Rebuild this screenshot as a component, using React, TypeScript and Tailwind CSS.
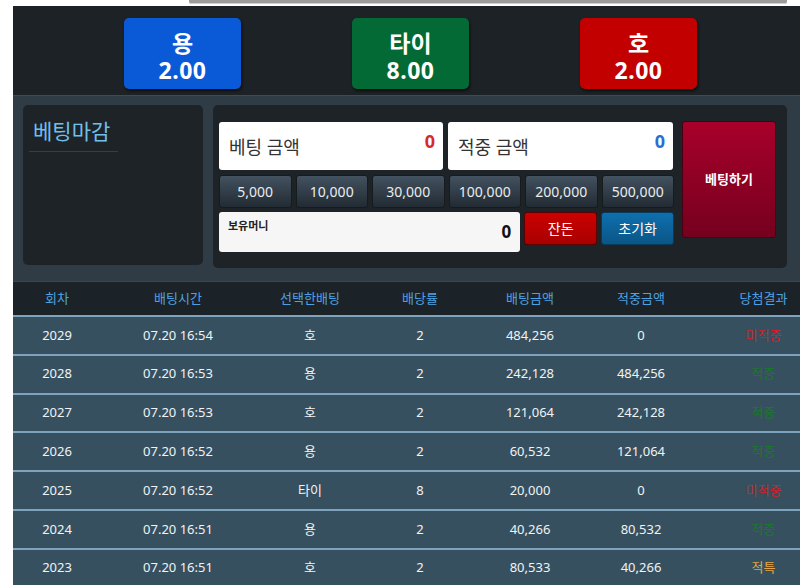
import React from "react";

const rows = [
  ["2029", "07.20 16:54", "호", "2", "484,256", "0", "미적중"],
  ["2028", "07.20 16:53", "용", "2", "242,128", "484,256", "적중"],
  ["2027", "07.20 16:53", "호", "2", "121,064", "242,128", "적중"],
  ["2026", "07.20 16:52", "용", "2", "60,532", "121,064", "적중"],
  ["2025", "07.20 16:52", "타이", "8", "20,000", "0", "미적중"],
  ["2024", "07.20 16:51", "용", "2", "40,266", "80,532", "적중"],
  ["2023", "07.20 16:51", "호", "2", "80,533", "40,266", "적특"],
];

const resultColor = (r: string) =>
  r === "미적중" ? "text-[#d4202c]" : r === "적중" ? "text-[#177a2a]" : "text-[#e8a445]";

const chips = ["5,000", "10,000", "30,000", "100,000", "200,000", "500,000"];

export default function App() {
  return (
    <div
      className="w-[800px] h-[585px] overflow-hidden bg-white relative"
      style={{ fontFamily: '"Noto Sans", "Noto Sans CJK KR", sans-serif' }}
    >
      <div className="h-[6px] relative">
        <div className="absolute left-[189px] w-[598px] top-0 h-[4px] bg-[#9b9b9b] rounded-b-[2px] border-b border-[#cfcfcf]" />
      </div>
      <div className="ml-[13px]">
        {/* Top choice buttons */}
        <div className="h-[89px] bg-[#1c2226] flex items-start pt-[12px] pl-[111px] gap-[111px]">
          {[
            ["용", "2.00", "bg-[#0a5ad8]"],
            ["타이", "8.00", "bg-[#036a35]"],
            ["호", "2.00", "bg-[#c20000]"],
          ].map(([t, v, c]) => (
            <div
              key={t}
              className={`w-[117px] h-[71px] rounded-[5px] ${c} flex flex-col items-center justify-center pt-[5px] text-white font-bold text-[23px] shadow-[1px_2px_3px_rgba(0,0,0,0.6)]`}
            >
              <div className="leading-[24px]">{t}</div>
              <div className="leading-[24px] mt-[3px] tracking-[0.5px]">{v}</div>
            </div>
          ))}
        </div>

        {/* Betting panel */}
        <div className="h-[186px] bg-[#2f3b45] border-t border-[#3e4a54] flex pt-[9px] pl-[10px]">
          <div className="w-[180px] h-[160px] rounded-[5px] bg-[#1e2328] pt-[12px] pl-[6px]">
            <div className="w-[89px] border-b border-[#343e46] pl-[4px] pb-[6px] text-[#6fc0ea] text-[21px] leading-[28px]">
              베팅마감
            </div>
          </div>
          <div className="ml-[10px] w-[574px] h-[163px] rounded-[5px] bg-[#1e2328] flex pt-[17px] pl-[6px]">
            <div className="w-[455px] flex flex-col">
              <div className="flex gap-[5px]">
                <div className="w-[224px] h-[48px] rounded-[3px] bg-white flex items-center justify-between pl-[10px] pr-[8px]">
                  <span className="text-[18px] text-[#333] mt-[2px]">베팅 금액</span>
                  <span className="text-[18px] font-bold text-[#d62b2b] self-start mt-[6px]">0</span>
                </div>
                <div className="w-[225px] h-[48px] rounded-[3px] bg-white flex items-center justify-between pl-[10px] pr-[8px]">
                  <span className="text-[18px] text-[#333] mt-[2px]">적중 금액</span>
                  <span className="text-[18px] font-bold text-[#2a6fd0] self-start mt-[6px]">0</span>
                </div>
              </div>
              <div className="flex gap-[4px] mt-[5px]">
                {chips.map((c) => (
                  <div
                    key={c}
                    className="flex-1 h-[33px] rounded-[3px] bg-gradient-to-b from-[#435260] to-[#222b33] border border-[#161b1f] flex items-center justify-center text-[#e8ecef] text-[14px]"
                  >
                    {c}
                  </div>
                ))}
              </div>
              <div className="flex gap-[4px] mt-[4px]">
                <div className="w-[302px] h-[40px] rounded-[3px] bg-[#f6f6f6] relative">
                  <span className="absolute left-[9px] top-[6px] text-[11px] font-bold text-[#222]">보유머니</span>
                  <span className="absolute right-[9px] top-[7px] text-[17px] font-bold text-[#111]">0</span>
                </div>
                <div className="w-[73px] h-[33px] rounded-[3px] bg-gradient-to-b from-[#cc0000] to-[#a80000] border border-[#5a0000] flex items-center justify-center text-white text-[14px]">
                  잔돈
                </div>
                <div className="w-[73px] h-[33px] rounded-[3px] bg-gradient-to-b from-[#0f6fae] to-[#0a5686] border border-[#083a5a] flex items-center justify-center text-white text-[14px]">
                  초기화
                </div>
              </div>
            </div>
            <div className="ml-[8px] -mt-[1px] w-[94px] h-[117px] rounded-[3px] bg-gradient-to-b from-[#a8002b] to-[#76001f] border border-[#4a0014] flex items-center justify-center text-white font-bold text-[13px]">
              베팅하기
            </div>
          </div>
        </div>

        {/* Table */}
        <div className="grid grid-cols-[88px_154px_110px_110px_110px_112px_1fr] h-[34px] bg-[#1b2329] border-t border-[#3b4852] items-center text-[13px] text-[#4ea2e2] text-center">
          <div>회차</div>
          <div>배팅시간</div>
          <div>선택한배팅</div>
          <div>배당률</div>
          <div>배팅금액</div>
          <div>적중금액</div>
          <div className="pl-[30px]">당첨결과</div>
        </div>
        {rows.map((r) => (
          <div
            key={r[0]}
            className="grid grid-cols-[88px_154px_110px_110px_110px_112px_1fr] h-[38.8px] bg-[#37505f] border-t-2 border-[#7fa3bd] items-center text-[13px] text-[#f0f3f5] text-center"
          >
            <div>{r[0]}</div>
            <div>{r[1]}</div>
            <div>{r[2]}</div>
            <div>{r[3]}</div>
            <div>{r[4]}</div>
            <div>{r[5]}</div>
            <div className={`pl-[30px] ${resultColor(r[6])}`}>{r[6]}</div>
          </div>
        ))}
      </div>
    </div>
  );
}
